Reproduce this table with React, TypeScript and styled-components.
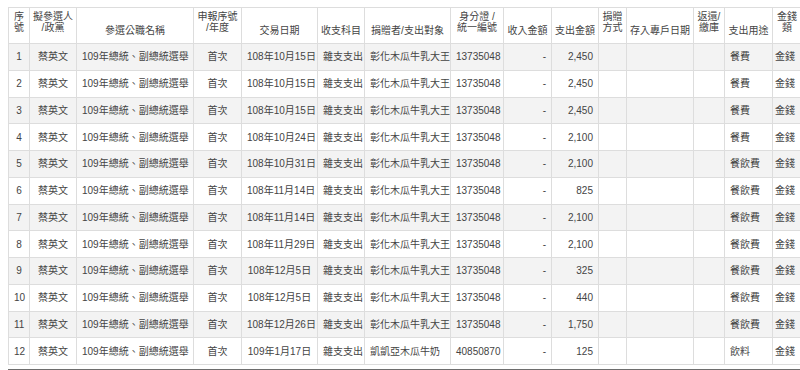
import React from "react";
import styled, { createGlobalStyle } from "styled-components";

const GlobalStyle = createGlobalStyle`
  html, body {
    margin: 0;
    padding: 0;
    background: #ffffff;
    overflow: hidden;
  }
  body {
    font-family: "Liberation Sans", "Noto Sans CJK TC", sans-serif;
    color: #444444;
  }
`;

const Page = styled.div`
  width: 800px;
  height: 370px;
  padding: 7px 0 0 8px;
  box-sizing: border-box;
  overflow: hidden;
`;

const Table = styled.table`
  border-collapse: collapse;
  table-layout: fixed;
  width: 793px;
  font-size: 10px;
  line-height: 11px;
`;

const HeadCell = styled.th<{ stacked?: boolean }>`
  height: 36px;
  padding: 0 1px ${(props) => (props.stacked ? "10px" : "7px")};
  box-sizing: border-box;
  border: 1px solid #dddddd;
  font-weight: 400;
  text-align: center;
  vertical-align: bottom;
  white-space: nowrap;
`;

const Row = styled.tr<{ shaded?: boolean }>`
  background: ${(props) => (props.shaded ? "#f3f3f3" : "#ffffff")};
`;

const Cell = styled.td<{ align?: "left" | "center" | "right"; tight?: boolean }>`
  height: 26.75px;
  padding: 0 5px 0 ${(props) => (props.tight ? "2px" : "5px")};
  box-sizing: border-box;
  border: 1px solid #dddddd;
  text-align: ${(props) => props.align || "center"};
  vertical-align: middle;
  white-space: nowrap;
  overflow: hidden;
`;

const Footer = styled.div`
  margin: 4px 0 0 0;
  border-top: 2px solid #6d6d6d;
`;

const widths = [21, 47, 117, 48, 76, 47, 86, 53, 48, 47, 28, 67, 31, 48, 29];

const headers: Array<{ lines: string[] }> = [
  { lines: ["序", "號"] },
  { lines: ["擬參選人", "/政黨"] },
  { lines: ["參選公職名稱"] },
  { lines: ["申報序號", "/年度"] },
  { lines: ["交易日期"] },
  { lines: ["收支科目"] },
  { lines: ["捐贈者/支出對象"] },
  { lines: ["身分證 /", "統一編號"] },
  { lines: ["收入金額"] },
  { lines: ["支出金額"] },
  { lines: ["捐贈", "方式"] },
  { lines: ["存入專戶日期"] },
  { lines: ["返還/", "繳庫"] },
  { lines: ["支出用途"] },
  { lines: ["金錢", "類"] },
];

interface Record {
  date: string;
  payee: string;
  id: string;
  amount: string;
  use: string;
}

const records: Record[] = [
  { date: "108年10月15日", payee: "彰化木瓜牛乳大王", id: "13735048", amount: "2,450", use: "餐費" },
  { date: "108年10月15日", payee: "彰化木瓜牛乳大王", id: "13735048", amount: "2,450", use: "餐費" },
  { date: "108年10月15日", payee: "彰化木瓜牛乳大王", id: "13735048", amount: "2,450", use: "餐費" },
  { date: "108年10月24日", payee: "彰化木瓜牛乳大王", id: "13735048", amount: "2,100", use: "餐費" },
  { date: "108年10月31日", payee: "彰化木瓜牛乳大王", id: "13735048", amount: "2,100", use: "餐飲費" },
  { date: "108年11月14日", payee: "彰化木瓜牛乳大王", id: "13735048", amount: "825", use: "餐飲費" },
  { date: "108年11月14日", payee: "彰化木瓜牛乳大王", id: "13735048", amount: "2,100", use: "餐飲費" },
  { date: "108年11月29日", payee: "彰化木瓜牛乳大王", id: "13735048", amount: "2,100", use: "餐飲費" },
  { date: "108年12月5日", payee: "彰化木瓜牛乳大王", id: "13735048", amount: "325", use: "餐飲費" },
  { date: "108年12月5日", payee: "彰化木瓜牛乳大王", id: "13735048", amount: "440", use: "餐飲費" },
  { date: "108年12月26日", payee: "彰化木瓜牛乳大王", id: "13735048", amount: "1,750", use: "餐飲費" },
  { date: "109年1月17日", payee: "凱凱亞木瓜牛奶", id: "40850870", amount: "125", use: "飲料" },
];

export default function App() {
  return (
    <>
      <GlobalStyle />
      <Page>
        <Table>
          <colgroup>
            {widths.map((w, idx) => (
              <col key={idx} style={{ width: w }} />
            ))}
          </colgroup>
          <thead>
            <tr>
              {headers.map((h, idx) => (
                <HeadCell key={idx} stacked={h.lines.length > 1}>
                  {h.lines.map((line, i) => (
                    <React.Fragment key={i}>
                      {i > 0 && <br />}
                      {line}
                    </React.Fragment>
                  ))}
                </HeadCell>
              ))}
            </tr>
          </thead>
          <tbody>
            {records.map((r, idx) => (
              <Row key={idx} shaded={idx % 2 === 0}>
                <Cell>{idx + 1}</Cell>
                <Cell>蔡英文</Cell>
                <Cell align="left">109年總統、副總統選舉</Cell>
                <Cell>首次</Cell>
                <Cell>{r.date}</Cell>
                <Cell>雜支支出</Cell>
                <Cell align="left">{r.payee}</Cell>
                <Cell align="left">{r.id}</Cell>
                <Cell align="right">-</Cell>
                <Cell align="right">{r.amount}</Cell>
                <Cell />
                <Cell />
                <Cell />
                <Cell align="left">{r.use}</Cell>
                <Cell align="left" tight>金錢</Cell>
              </Row>
            ))}
          </tbody>
        </Table>
        <Footer />
      </Page>
    </>
  );
}
